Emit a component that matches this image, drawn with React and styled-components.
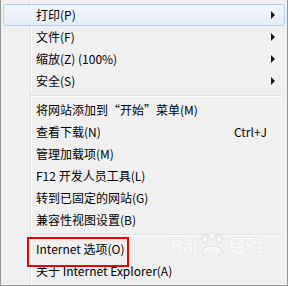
import React from 'react';
import styled, { createGlobalStyle } from 'styled-components';

const GlobalStyle = createGlobalStyle`
  html, body {
    margin: 0;
    padding: 0;
    background: #f0f0f0;
  }
`;

const groups = [
  [
    { label: '打印(P)', sub: true, active: true },
    { label: '文件(F)', sub: true },
    { label: '缩放(Z) (100%)', sub: true },
    { label: '安全(S)', sub: true },
  ],
  [
    { label: '将网站添加到“开始”菜单(M)' },
    { label: '查看下载(N)', key: 'Ctrl+J' },
    { label: '管理加载项(M)' },
    { label: 'F12 开发人员工具(L)' },
    { label: '转到已固定的网站(G)' },
    { label: '兼容性视图设置(B)' },
  ],
  [
    { label: 'Internet 选项(O)' },
    { label: '关于 Internet Explorer(A)' },
  ],
];

const App = () => {
  return (
    <>
      <GlobalStyle />
      <Menu>
        {groups.map((items, gi) => (
          <React.Fragment key={gi}>
            {gi > 0 && <Separator />}
            {items.map((it) => (
              <Item key={it.label} active={it.active}>
                <Label>{it.label}</Label>
                {it.key && <Shortcut>{it.key}</Shortcut>}
                {it.sub && <Arrow />}
              </Item>
            ))}
          </React.Fragment>
        ))}
        <RedMark />
        <Watermark>
          <WmTop>
            <span>Bai</span>
            <Paw>
              <svg width="28" height="26" viewBox="0 0 28 26">
                <g fill="#f8f8f8" stroke="#dedede" strokeWidth="1">
                  <ellipse cx="7" cy="7" rx="3" ry="4" />
                  <ellipse cx="14" cy="4" rx="3" ry="3.5" />
                  <ellipse cx="21" cy="7" rx="3" ry="4" />
                  <path d="M4 20 C4 12 24 12 24 20 C24 25 4 25 4 20 Z" />
                </g>
              </svg>
              <PawText>du</PawText>
            </Paw>
            <span>经验</span>
          </WmTop>
          <WmUrl>jingyan.baidu.com</WmUrl>
        </Watermark>
      </Menu>
    </>
  );
};

export default App;

const Menu = styled.div`
  position: relative;
  box-sizing: border-box;
  width: 288px;
  height: 286px;
  padding: 4px 2px 0 2px;
  border: 1px solid #979797;
  border-top: none;
  background:
    linear-gradient(to right, transparent 29px, #e2e3e3 29px, #e2e3e3 30px, #ffffff 30px, #ffffff 31px, transparent 31px),
    #f0f0f0;
  font: 12px/20px "Noto Sans CJK SC", "Liberation Sans", sans-serif;
  color: #000;
  overflow: hidden;
`;

const Item = styled.div`
  box-sizing: border-box;
  height: 22px;
  display: flex;
  align-items: center;
  padding: 0 9px 0 32px;
  border: 1px solid ${(p) => (p.active ? '#aecff7' : 'transparent')};
  border-radius: 3px;
  background: ${(p) => (p.active ? 'linear-gradient(#f2f6fc, #e4ecf7)' : 'transparent')};
`;

const Label = styled.span`
  flex: 1;
  white-space: nowrap;
`;

const Shortcut = styled.span`
  margin-right: 8px;
  white-space: nowrap;
`;

const Arrow = styled.span`
  width: 0;
  height: 0;
  border-top: 4px solid transparent;
  border-bottom: 4px solid transparent;
  border-left: 4px solid #1a1a1a;
`;

const Separator = styled.div`
  height: 7px;
  margin: 0 3px 0 28px;
  background: linear-gradient(#f0f0f0 3px, #e0e0e0 3px, #e0e0e0 4px, #ffffff 4px, #ffffff 5px, #f0f0f0 5px);
`;

const RedMark = styled.div`
  position: absolute;
  left: 26px;
  top: 237px;
  width: 98px;
  height: 26px;
  border: 2px solid #e8000b;
`;

const Watermark = styled.div`
  position: absolute;
  left: 170px;
  top: 232px;
  color: #f8f8f8;
  text-shadow: 0 0 1px #d4d4d4;
  pointer-events: none;
`;

const WmTop = styled.div`
  display: flex;
  align-items: flex-end;
  font: bold 17px/22px "Liberation Sans", "Noto Sans CJK SC", sans-serif;
`;

const Paw = styled.span`
  position: relative;
  display: inline-block;
  width: 28px;
  height: 26px;
  margin: 0 2px 0 1px;
`;

const PawText = styled.span`
  position: absolute;
  left: 6px;
  bottom: 0;
  font-size: 11px;
  line-height: 12px;
`;

const WmUrl = styled.div`
  font: 11px/12px "Liberation Sans", sans-serif;
  margin-left: 2px;
`;
